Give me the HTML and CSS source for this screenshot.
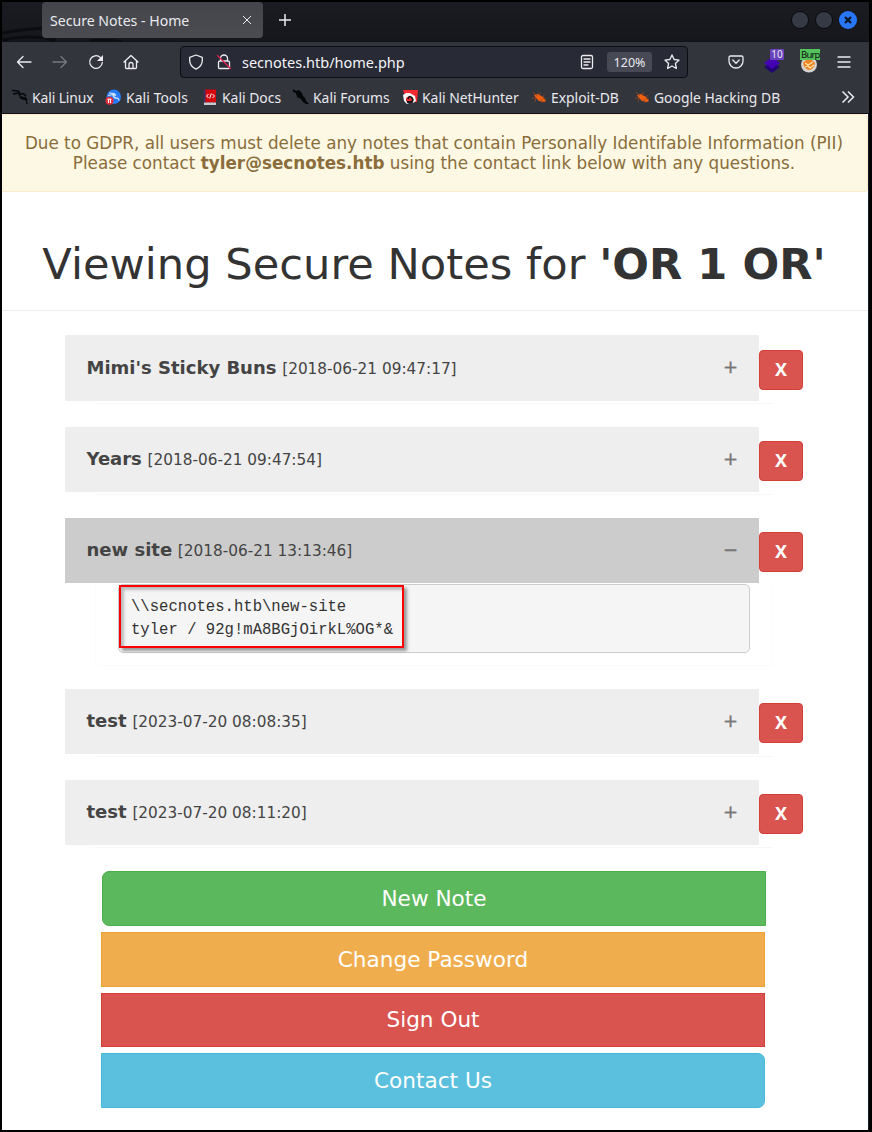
FILE: index.html
```html
<!DOCTYPE html>
<html lang="en">
<head>
<meta charset="utf-8">
<title>Secure Notes - Home</title>
<link rel="stylesheet" href="styles.css">
</head>
<body>
<div class="window">
  <header class="chrome">
    <div class="titlebar">
      <svg class="wallpaper" viewBox="0 0 150 40" width="150" height="40"><path d="M0 31Q20 27 45 26M0 38Q28 32 54 38M45 35L52 40M88 39Q105 37 120 40"/></svg>
      <div class="tab"><span>Secure Notes - Home</span><svg width="10" height="10" viewBox="0 0 10 10"><path d="M1 1l8 8M9 1l-8 8"/></svg></div>
      <svg class="newtab" width="14" height="14" viewBox="0 0 14 14"><path d="M7 1v12M1 7h12"/></svg>
      <div class="controls"><i></i><i></i><i class="close"><svg width="18" height="18" viewBox="0 0 18 18"><path d="M6 6l6 6M12 6l-6 6"/></svg></i></div>
    </div>
    <nav class="toolbar">
      <svg class="icon back" viewBox="0 0 16 16"><path d="M15 8H1.500M7 2.500L1.500 8 7 13.500"/></svg>
      <svg class="icon forward" viewBox="0 0 16 16"><path d="M1 8h13.500M9 2.500L14.500 8 9 13.500"/></svg>
      <svg class="icon reload" viewBox="0 0 16 16"><path d="M12.300 3.400A6.300 6.300 0 1 0 14.300 8.500"/><path class="solid" d="M15 1v6H9z"/></svg>
      <svg class="icon home" viewBox="0 0 16 16"><path d="M1 8l7-6.500L15 8M2.500 7v6.500q0 1 1 1h9q1 0 1-1V7M6 14v-3.500q0-2 2-2t2 2V14"/></svg>
      <div class="urlbar">
        <svg class="icon" viewBox="0 0 16 16"><path d="M8 1L14.300 3.300V6.500Q14.300 12 8 15.200 1.700 12 1.700 6.500V3.300z"/></svg>
        <svg class="icon lock" viewBox="0 0 16 16"><path d="M4.500 7V4.500a3.500 3.500 0 0 1 7 0V7M4 7h8q1.500 0 1.500 1.500v5q0 1-1 1h-9q-1 0-1-1v-5Q2.500 7 4 7"/><path class="slash" d="M1.500 1.500l13 13"/></svg>
        <span class="url">secnotes.htb/home.php</span>
        <svg class="icon reader" viewBox="0 0 16 16"><rect x="2.500" y="1.500" width="11" height="13" rx="1.500"/><path d="M5 5h6M5 8h6M5 11h4"/></svg>
        <span class="zoom">120%</span>
        <svg class="icon star" viewBox="0 0 16 16"><path d="M8 .9l2.100 4.600 5 .6-3.700 3.400 1 5L8 12l-4.400 2.500 1-5L.9 6.100l5-.6z"/></svg>
      </div>
      <svg class="icon pocket" viewBox="0 0 16 16"><path d="M2.500 2h11q1.500 0 1.500 1.500V7a7 7 0 0 1-14 0V3.500Q1 2 2.500 2M4.800 6L8 9.200 11.200 6"/></svg>
      <div class="ext layers"><svg width="20" height="20" viewBox="0 0 20 20"><path fill="#20066e" d="M2 12l8-5 8 5-8 6z"/><path fill="#4500b4" d="M2 8l8-6 8 6-8 6z"/></svg><b>10</b></div>
      <div class="ext proxy"><svg width="20" height="20" viewBox="0 0 20 20"><circle cx="10" cy="9.500" r="8" fill="#d5d3d2"/><path fill="#ef8424" d="M4 8Q7 3 13 5l3 3q-1 7-6 7-5-1-6-7"/><path d="M6 8l3 2 5-3M6 12l3-1 2 2 4-3" fill="none" stroke="#ffe3a2" stroke-width="1.200"/></svg><b>Burp</b></div>
      <svg class="icon menu" viewBox="0 0 16 16"><path d="M2 3h12M2 8h12M2 13h12"/></svg>
    </nav>
    <nav class="bookmarks">
      <a class="b1"><svg viewBox="0 0 16 16"><use href="#dragon"/></svg>Kali Linux</a>
      <a class="b2"><svg viewBox="0 0 16 16"><circle cx="8.800" cy="7.800" r="7.200" fill="#267af3"/><path d="M4 4l5 .5 2 2M3 6.500l5-1 3 1M8 6q1 3.500 4 3 2 .5 2 2.500" fill="none" stroke="#d7e8ff" stroke-width="1.200"/><circle cx="4.500" cy="11.800" r="4" fill="#e22d3b"/><path d="M2.500 10.200h4M3.500 10.200V14M5.500 10.200V14" stroke="#fff"/></svg>Kali Tools</a>
      <a class="b3"><svg viewBox="0 0 16 16"><path d="M2 .500h12v13H2z" fill="#d5070c"/><path d="M2 .500h1.500v13H2z" fill="#42316c"/><path d="M2 13.500h12V16H2z" fill="#c7c9ce"/><path d="M6.500 5L4.500 7l2 2M10.500 5l2 2-2 2M9.300 4.500L7.700 9.500" fill="none" stroke="#fff"/></svg>Kali Docs</a>
      <a class="b4"><svg viewBox="0 0 16 16"><path d="M0 0l3 2 3-1 3 3 1 3 2 2 1 3 3 3-3 0-3-2-2-3-4-2-1-4-3-1z" fill="#050607"/></svg>Kali Forums</a>
      <a class="b5"><svg viewBox="0 0 16 16"><path d="M1 1h15l-1 12H5z" fill="#f3292f"/><path d="M1 6l3-2 4 0 5 3 1 5-3 2-1-4-3-3-3 2 0 3 3 2-2 1-3-3z" fill="#f8f8f8"/><path d="M6 10q1-4 4-1 2 3-1 4H5" fill="none" stroke="#141518" stroke-width="1.800"/></svg>Kali NetHunter</a>
      <a class="b6"><svg viewBox="0 0 16 16"><use href="#bug"/></svg>Exploit-DB</a>
      <a class="b7"><svg viewBox="0 0 16 16"><use href="#bug"/></svg>Google Hacking DB</a>
      <svg class="more" viewBox="0 0 14 14"><path d="M1.500 1.500L7 7l-5.500 5.500M7 1.500L12.500 7 7 12.500"/></svg>
    </nav>
  </header>
  <main>
    <div class="alert"><div>Due to GDPR, all users must delete any notes that contain Personally Identifable Information (PII)</div><div>Please contact <strong>tyler@secnotes.htb</strong> using the contact link below with any questions.</div></div>
    <h1><span>Viewing Secure Notes for <b>'OR 1 OR'</b></span></h1>
    <section class="notes">
      <article class="note first"><div class="bar"><span><b>Mimi's Sticky Buns</b> <small>[2018-06-21 09:47:17]</small></span><i>+</i></div><button>X</button><div class="panel"></div></article>
      <article class="note"><div class="bar"><span><b>Years</b> <small>[2018-06-21 09:47:54]</small></span><i>+</i></div><button>X</button><div class="panel"></div></article>
      <article class="note open"><div class="bar"><span><b>new site</b> <small>[2018-06-21 13:13:46]</small></span><i>−</i></div><button>X</button><div class="panel"><pre>\\secnotes.htb\new-site
tyler / 92g!mA8BGjOirkL%OG*&amp;</pre><div class="highlight"></div></div></article>
      <article class="note"><div class="bar"><span><b>test</b> <small>[2023-07-20 08:08:35]</small></span><i>+</i></div><button>X</button><div class="panel"></div></article>
      <article class="note"><div class="bar"><span><b>test</b> <small>[2023-07-20 08:11:20]</small></span><i>+</i></div><button>X</button><div class="panel"></div></article>
    </section>
    <div class="actions"><a class="green">New Note</a><a class="orange">Change Password</a><a class="red">Sign Out</a><a class="blue">Contact Us</a></div>
  </main>
</div>
<svg class="defs" width="0" height="0"><defs>
  <g id="dragon"><path d="M0 1.500l6 .5 2 2M1 5l6-1 2 2M7 4q0 4 4 4.500 3 0 4 2.500M9 4.500q4 0 5 3M8 7q0 3 4 3 3 1 3 5" fill="none" stroke="#07080a" stroke-width="1.300"/></g>
  <g id="bug"><path d="M3 6l4-1 5 3 3 4-2 1-5-1-3-3z" fill="#f2600f"/><path d="M2 3l4 4M9 3v4M1 9h5M13 6l-1 4M5 9l-1 4M15 10l-2 0M10 10l1 4" fill="none" stroke="#9b4521" stroke-width=".8"/></g>
</defs></svg>
</body>
</html>
```
FILE: styles.css
```css
* { box-sizing: border-box; }
body { margin: 0; background: #fff; font-family: "DejaVu Sans", sans-serif; color: #333; }
.defs { position: absolute; }
.window { width: 872px; height: 1132px; border: 2px solid #000; border-right: 3px solid #000; overflow: hidden; }
.chrome { height: 112px; font-family: "Noto Sans", sans-serif; color: #e9e9ed; background: #33353d; border-bottom: 1px solid #111217; }
.chrome svg { fill: none; stroke: #ececf0; flex: none; }
.titlebar { height: 40px; background: linear-gradient(#1b1c21, #16171c); border-bottom: 1px solid #101116; display: flex; position: relative; }
.wallpaper { position: absolute; left: 0; top: 0; }
.titlebar .wallpaper { stroke: #0c0d10; stroke-width: 3; }
.tab { position: relative; margin-left: 40px; width: 221px; height: 36px; border-radius: 4px; background: linear-gradient(#43454b, #4a4c52); display: flex; align-items: center; justify-content: space-between; padding: 0 11px 0 8px; font-size: 14.100px; }
.newtab { margin: 11px 0 0 15px; stroke-width: 1.500; }
.controls { display: flex; gap: 6px; margin: 9px 12px 0 auto; }
.controls i { width: 18px; height: 18px; border-radius: 50%; background: #363a45; border: 1px solid #090a0c; }
.controls .close { background: #2777ff; border: 0; }
.controls .close svg { display: block; stroke: #101828; stroke-width: 2.400; }
.toolbar { height: 40px; display: flex; align-items: center; padding-left: 14px; }
.icon { width: 16px; height: 16px; stroke-width: 1.300; stroke-linejoin: round; stroke-linecap: round; }
.icon .solid { fill: #ececf0; stroke: none; }
.toolbar .forward { stroke: #777980; margin-left: 20px; }
.reload { margin-left: 20px; }
.home { margin-left: 19px; }
.urlbar { width: 508px; height: 32px; margin-left: 41px; background: #282a36; border: 1px solid #0d0e14; border-radius: 4px; display: flex; align-items: center; padding: 0 7px; }
.lock { margin-left: 12px; }
.toolbar .slash { stroke: #e1224d; }
.url { font-size: 14.500px; color: #f5f5f7; margin-left: 10px; flex: 1; }
.zoom { width: 45px; height: 20px; margin: 0 12px; border-radius: 3px; background: #474a54; font-size: 12.500px; line-height: 22px; text-align: center; }
.pocket { margin-left: 40px; }
.ext { width: 20px; height: 30px; position: relative; }
.ext svg { display: block; margin-top: 8px; stroke: none; }
.ext b { position: absolute; font-weight: 400; white-space: nowrap; }
.layers { margin-left: 18px; }
.layers b { left: 8px; top: 2px; width: 14px; height: 11px; line-height: 11px; font-size: 10px; text-align: center; background: #6842bb; border-radius: 1px; }
.proxy { margin-left: 17px; }
.proxy b { left: 1px; top: 2px; width: 20px; height: 11px; line-height: 11px; font-size: 9.500px; letter-spacing: -.8px; background: #53c35b; color: #111; padding-left: 1px; }
.menu { margin-left: 17px; }
.bookmarks { height: 30px; display: flex; align-items: center; font-size: 13.900px; padding-left: 10px; }
.bookmarks a { display: flex; align-items: center; gap: 4px; white-space: nowrap; }
.bookmarks a svg { width: 16px; height: 16px; stroke: none; }
.bookmarks .b1 { width: 93px; letter-spacing: -.1px; }
.bookmarks .b2 { width: 97px; gap: 5px; letter-spacing: .1px; }
.b3 { width: 91px; }
.b4 { width: 109px; }
.b5 { width: 129px; }
.b6 { width: 103px; }
.more { width: 14px; height: 14px; margin: 0 14px 0 auto; stroke-width: 1.500; }
main { height: 1016px; border-right: 1px solid #141c2d; }
.alert { height: 78px; background: #fcf8e3; border: 1px solid #faebcc; border-left: 0; border-radius: 0 4px 4px 0; color: #8a6d3b; font-size: 16.800px; line-height: 20px; padding: 18px 1px 0 0; text-align: center; white-space: nowrap; }
h1 { margin: 0; height: 119px; border-bottom: 1px solid #eee; font-size: 43.200px; line-height: 48px; font-weight: 400; padding: 48px 2px 0 0; text-align: center; white-space: nowrap; }
.notes { padding: 24px 0 0 63px; display: grid; gap: 22px; }
.note { display: grid; grid-template-columns: 694px 44px; grid-template-rows: 65px 4px; }
.note.first { grid-template-rows: 66px 4px; }
.bar { background: #eee; color: #444; padding: 0 21px 2px 21.500px; display: flex; align-items: center; justify-content: space-between; font-size: 18px; }
.bar small { font-size: 15.300px; }
.bar i { font-style: normal; font-size: 18px; line-height: 18px; color: #777; -webkit-text-stroke: .4px #777; }
.note button { height: 40px; margin: 14px 0 0; padding: 0 0 2px; background: #d9534f; border: 1px solid #d43f3a; border-radius: 4px; color: #fff; font: bold 18px "Noto Sans", sans-serif; }
.first button { margin-top: 15px; }
.panel { grid-column: 1 / 3; margin-left: 30px; width: 678px; height: 3px; border-bottom: 1px solid #f7f7f7; }
.open { grid-template-rows: 65px 84px; }
.open .bar { background: #ccc; }
.open .panel { position: relative; height: 83px; padding: 1px 22px; border: 1px solid #fbfbfb; border-top: 0; border-radius: 0 0 4px 4px; }
pre { margin: 0; width: 632px; height: 69px; padding: 11px 12px; border: 1px solid #ccc; border-radius: 5px; background: #f5f5f5; font: 15.600px/23px "Liberation Mono", monospace; color: #333; text-indent: 0; }
.highlight { position: absolute; left: 23px; top: 2px; width: 285px; height: 63px; border: 2px solid #f00; box-shadow: 3px 3px 3px #999, inset 3px 3px 3px #bbb; }
.actions { width: 665px; margin: 22px 0 0 99px; display: grid; grid-template-rows: 55px 55px 54px 55px; gap: 6px; }
.actions a { width: 664px; border: 1px solid; color: #fff; font-size: 21.600px; display: flex; align-items: center; justify-content: center; }
.actions .green { margin-left: 1px; background: #5cb85c; border-color: #4cae4c; border-radius: 7px 0 0 7px; }
.actions .orange { background: #f0ad4e; border-color: #eea236; }
.actions .red { background: #d9534f; border-color: #d43f3a; padding-bottom: 2px; }
.actions .blue { background: #5bc0de; border-color: #46b8da; border-radius: 0 7px 7px 0; }
```
